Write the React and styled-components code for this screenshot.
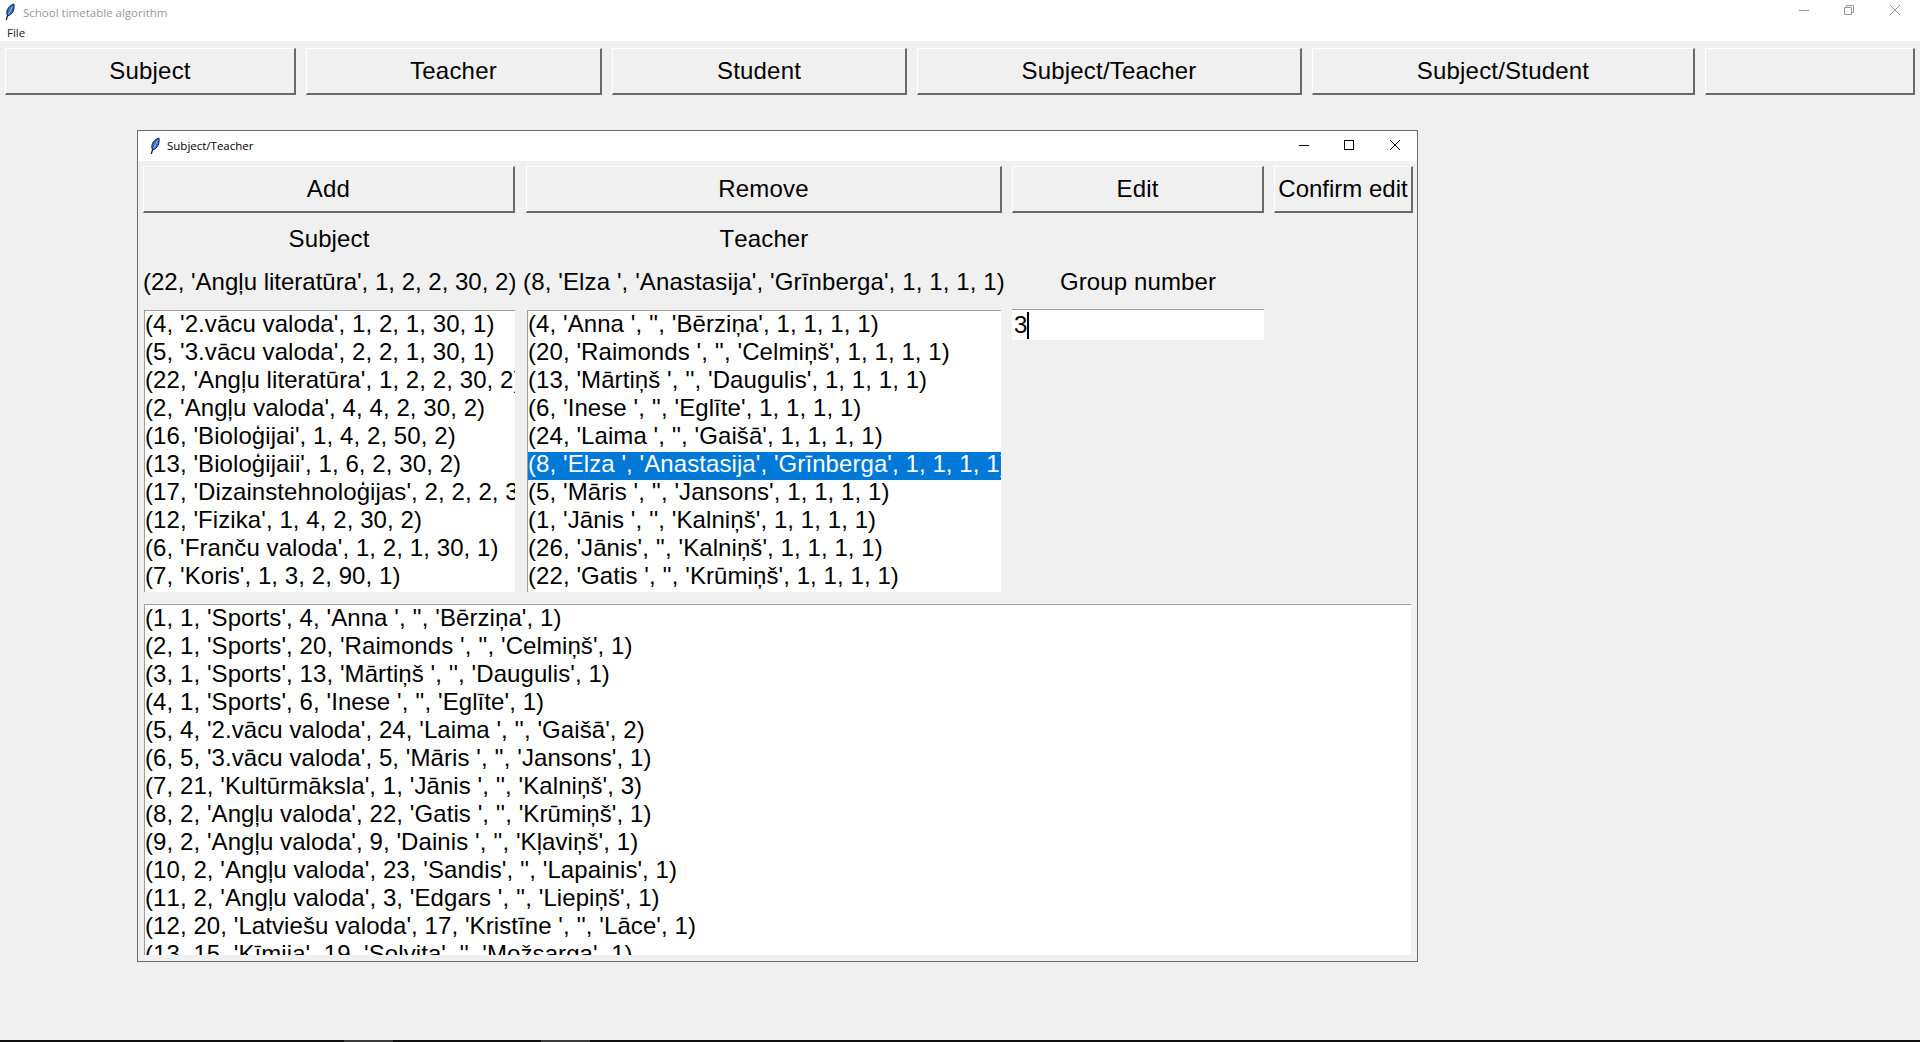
import React from 'react';
import styled, { createGlobalStyle } from 'styled-components';

const GlobalStyle = createGlobalStyle`
html, body { margin: 0; padding: 0; background: #f0f0f0; overflow: hidden; }
* { box-sizing: border-box; }
#root { height: 100vh; }
`

const Page = styled.div`
display: flex;
flex-direction: column;
height: 1042px;
font-family: "Liberation Sans", Arial, sans-serif;
font-kerning: none;
color: #000;
`
const TitleBar = styled.div`
display: flex;
align-items: center;
height: ${(props) => props.$height}px;
background: #fff;
padding-left: ${(props) => props.$left}px;
padding-bottom: ${(props) => props.$bottom || 0}px;
font-family: "Open Sans", "Noto Sans", sans-serif;
font-size: 11.5px;
color: ${(props) => (props.$inactive ? '#999' : '#000')};
`
const TitleText = styled.span`
margin-left: ${(props) => props.$gap}px;
flex: 1;
`
const Controls = styled.div`
display: flex;
gap: 35px;
margin-top: ${(props) => props.$raise}px;
padding-right: ${(props) => props.$right}px;
svg:last-child { margin-left: 1px; }
`
const MenuBar = styled.div`
height: 17px;
padding: 0 0 0 7px;
background: #fff;
font-family: "Open Sans", "Noto Sans", sans-serif;
font-size: 11.5px;
line-height: 17px;
color: #222;
`
const Toolbar = styled.div`
display: grid;
grid-template-columns: 301px 306px 305px 395px 393px 210px;
height: 47px;
margin: 7px 0 0 5px;
`
const Button = styled.button`
display: block;
width: calc(100% - ${(props) => props.$trim || 0}px);
height: 47px;
padding: 0;
background: #f0f0f0;
border: 2px solid;
border-color: #fff #696969 #696969 #fff;
border-left-width: 1px;
border-top-width: 1px;
font-family: inherit;
font-size: 24px;
letter-spacing: ${(props) => (props.$tight ? '0' : '0.2px')};
color: #000;
white-space: nowrap;
`
const SubWindow = styled.div`
width: 1281px;
height: 832px;
margin: 35px 0 0 137px;
border: 1px solid #6e6e6e;
background: #f0f0f0;
`
const Body = styled.div`
display: grid;
grid-template-columns: 383px 486px 262px 139px;
grid-template-rows: 46px 54px 43px 283px;
padding: 5px 0 0 5px;
`
const Label = styled.div`
display: flex;
justify-content: ${(props) => (props.$start ? 'flex-start' : 'center')};
align-items: ${(props) => (props.$top ? 'flex-start' : 'center')};
width: calc(100% - ${(props) => props.$trim || 0}px);
height: ${(props) => (props.$top ? '32px' : 'auto')};
line-height: 32px;
font-size: 24px;
letter-spacing: ${(props) => (props.$start ? '0' : '0.12px')};
white-space: nowrap;
overflow-x: ${(props) => (props.$spill ? 'visible' : 'clip')};
`
const ListBox = styled.div`
width: calc(100% - ${(props) => props.$trim || 0}px);
margin: 1px 0 0 1px;
height: 282px;
padding-top: 1px;
background: #fff;
border-top: 1px solid #a0a0a0;
border-left: 1px solid #a0a0a0;
overflow: hidden;
`
const BigList = styled(ListBox)`
width: 1267px;
height: 351px;
margin: 12px 0 0 6px;
`
const Row = styled.div`
height: 28px;
line-height: 24px;
font-size: 24px;
letter-spacing: 0.08px;
white-space: nowrap;
background: ${(props) => (props.$selected ? '#0078d7' : 'transparent')};
color: ${(props) => (props.$selected ? '#fff' : '#000')};
`
const Entry = styled.div`
display: flex;
align-items: center;
width: calc(100% - 10px);
height: 31px;
padding-left: 2px;
background: #fff;
border-top: 1px solid #a0a0a0;
font-size: 24px;
`
const Caret = styled.span`
width: 2px;
height: 27px;
background: #000;
`
const Taskbar = styled.div`
display: flex;
flex-shrink: 0;
height: 2px;
margin-top: auto;
padding-left: 344px;
gap: 148px;
background: #101010;
`
const TaskItem = styled.span`
width: 49px;
background: #3a3a3a;
`

const subjects = [
    "(4, '2.vācu valoda', 1, 2, 1, 30, 1)",
    "(5, '3.vācu valoda', 2, 2, 1, 30, 1)",
    "(22, 'Angļu literatūra', 1, 2, 2, 30, 2)",
    "(2, 'Angļu valoda', 4, 4, 2, 30, 2)",
    "(16, 'Bioloģijai', 1, 4, 2, 50, 2)",
    "(13, 'Bioloģijaii', 1, 6, 2, 30, 2)",
    "(17, 'Dizainstehnoloģijas', 2, 2, 2, 30, 2)",
    "(12, 'Fizika', 1, 4, 2, 30, 2)",
    "(6, 'Franču valoda', 1, 2, 1, 30, 1)",
    "(7, 'Koris', 1, 3, 2, 90, 1)",
]

const teachers = [
    "(4, 'Anna ', '', 'Bērziņa', 1, 1, 1, 1)",
    "(20, 'Raimonds ', '', 'Celmiņš', 1, 1, 1, 1)",
    "(13, 'Mārtiņš ', '', 'Daugulis', 1, 1, 1, 1)",
    "(6, 'Inese ', '', 'Eglīte', 1, 1, 1, 1)",
    "(24, 'Laima ', '', 'Gaišā', 1, 1, 1, 1)",
    "(8, 'Elza ', 'Anastasija', 'Grīnberga', 1, 1, 1, 1)",
    "(5, 'Māris ', '', 'Jansons', 1, 1, 1, 1)",
    "(1, 'Jānis ', '', 'Kalniņš', 1, 1, 1, 1)",
    "(26, 'Jānis', '', 'Kalniņš', 1, 1, 1, 1)",
    "(22, 'Gatis ', '', 'Krūmiņš', 1, 1, 1, 1)",
]

const links = [
    "(1, 1, 'Sports', 4, 'Anna ', '', 'Bērziņa', 1)",
    "(2, 1, 'Sports', 20, 'Raimonds ', '', 'Celmiņš', 1)",
    "(3, 1, 'Sports', 13, 'Mārtiņš ', '', 'Daugulis', 1)",
    "(4, 1, 'Sports', 6, 'Inese ', '', 'Eglīte', 1)",
    "(5, 4, '2.vācu valoda', 24, 'Laima ', '', 'Gaišā', 2)",
    "(6, 5, '3.vācu valoda', 5, 'Māris ', '', 'Jansons', 1)",
    "(7, 21, 'Kultūrmāksla', 1, 'Jānis ', '', 'Kalniņš', 3)",
    "(8, 2, 'Angļu valoda', 22, 'Gatis ', '', 'Krūmiņš', 1)",
    "(9, 2, 'Angļu valoda', 9, 'Dainis ', '', 'Kļaviņš', 1)",
    "(10, 2, 'Angļu valoda', 23, 'Sandis', '', 'Lapainis', 1)",
    "(11, 2, 'Angļu valoda', 3, 'Edgars ', '', 'Liepiņš', 1)",
    "(12, 20, 'Latviešu valoda', 17, 'Kristīne ', '', 'Lāce', 1)",
    "(13, 15, 'Ķīmija', 19, 'Solvita', '', 'Možsarga', 1)",
]

const Feather = () => (
    <svg width="10" height="18" viewBox="0 0 10 18">
        <path d="M1.2 17 L2.8 12" stroke="#0b1a33" strokeWidth="1.2" fill="none" />
        <path d="M2.6 13 C0.6 9 2.4 3.5 8.8 1 C10 6 7.6 11.5 2.6 13 Z" fill="#2f72d6" stroke="#0b1a33" strokeWidth="1" />
        <path d="M3.4 11.5 L7.6 3.5" stroke="#a9cdf5" strokeWidth="0.8" fill="none" />
    </svg>
)

const Minimize = ({ color }) => (
    <svg width="10" height="10" viewBox="0 0 10 10"><path d="M0 5.5 H10" stroke={color} fill="none" /></svg>
)
const Maximize = ({ color }) => (
    <svg width="10" height="10" viewBox="0 0 10 10"><rect x="0.5" y="0.5" width="9" height="9" stroke={color} fill="none" /></svg>
)
const Restore = ({ color }) => (
    <svg width="10" height="10" viewBox="0 0 10 10"><path d="M0.5 2.5 H7.5 V9.5 H0.5 Z M2.5 2.5 V0.5 H9.5 V7.5 H7.5" stroke={color} fill="none" /></svg>
)
const Close = ({ color }) => (
    <svg width="10" height="10" viewBox="0 0 10 10"><path d="M0 0 L10 10 M10 0 L0 10" stroke={color} fill="none" /></svg>
)

export default function App() {
    return (
        <Page>
            <GlobalStyle />
            <TitleBar $height={24} $left={5} $inactive>
                <Feather />
                <TitleText $gap={8}>School timetable algorithm</TitleText>
                <Controls $right={20} $raise={-4}>
                    <Minimize color="#999" />
                    <Restore color="#999" />
                    <Close color="#999" />
                </Controls>
            </TitleBar>
            <MenuBar>File</MenuBar>
            <Toolbar>
                <Button $trim={10}>Subject</Button>
                <Button $trim={10}>Teacher</Button>
                <Button $trim={10}>Student</Button>
                <Button $trim={10}>Subject/Teacher</Button>
                <Button $trim={10}>Subject/Student</Button>
                <Button />
            </Toolbar>
            <SubWindow>
                <TitleBar $height={30} $left={12} $bottom={1}>
                    <Feather />
                    <TitleText $gap={7}>Subject/Teacher</TitleText>
                    <Controls $right={17} $raise={-1}>
                        <Minimize color="#000" />
                        <Maximize color="#000" />
                        <Close color="#000" />
                    </Controls>
                </TitleBar>
                <Body>
                    <Button $trim={11}>Add</Button>
                    <Button $trim={10}>Remove</Button>
                    <Button $trim={10}>Edit</Button>
                    <Button $tight>Confirm edit</Button>

                    <Label $trim={11}>Subject</Label>
                    <Label $trim={10}>Teacher</Label>
                    <span />
                    <span />

                    <Label $top $start $trim={11}>(22, 'Angļu literatūra', 1, 2, 2, 30, 2)</Label>
                    <Label $top $spill $trim={10}>(8, 'Elza ', 'Anastasija', 'Grīnberga', 1, 1, 1, 1)</Label>
                    <Label $top $trim={10}>Group number</Label>
                    <span />

                    <ListBox $trim={12}>
                        {subjects.map((item) => (
                            <Row key={item}>{item}</Row>
                        ))}
                    </ListBox>
                    <ListBox $trim={12}>
                        {teachers.map((item) => (
                            <Row key={item} $selected={item.startsWith('(8,')}>{item}</Row>
                        ))}
                    </ListBox>
                    <Entry>3<Caret /></Entry>
                </Body>
                <BigList>
                    {links.map((item) => (
                        <Row key={item}>{item}</Row>
                    ))}
                </BigList>
            </SubWindow>
            <Taskbar>
                <TaskItem />
                <TaskItem />
            </Taskbar>
        </Page>
    )
}
